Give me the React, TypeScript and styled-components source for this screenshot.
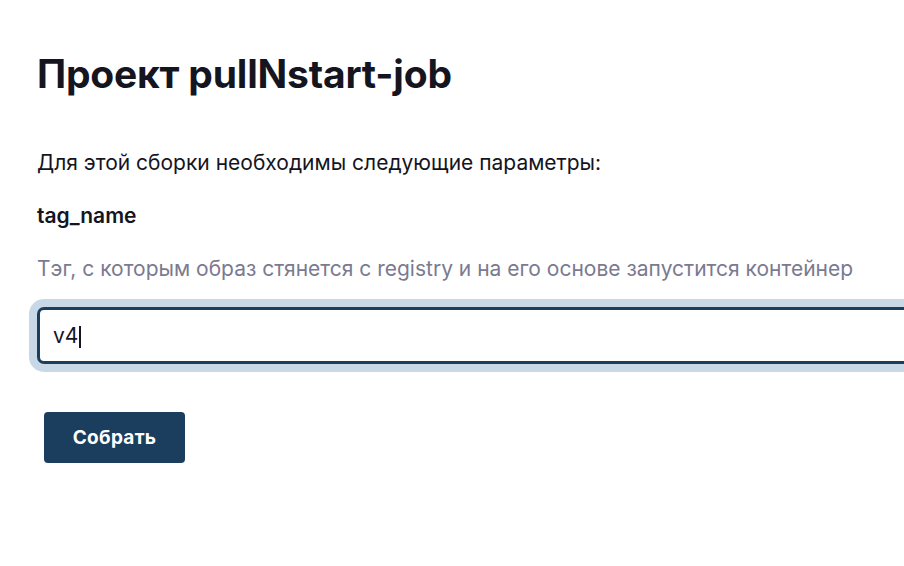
import React, { useEffect, useRef, useState } from "react";
import styled, { createGlobalStyle } from "styled-components";

const FONT = `Inter, "Noto Sans", "Liberation Sans", sans-serif`;

const GlobalStyle = createGlobalStyle`
  html, body {
    margin: 0;
    padding: 0;
    background: #ffffff;
    overflow: clip;
  }
  body {
    font-family: ${FONT};
    color: #15151f;
  }
`;

const Page = styled.div`
  width: 904px;
  height: 566px;
  overflow: clip;
  padding: 50px 0 0 37px;
  box-sizing: border-box;
`;

const Title = styled.h1`
  margin: 0 0 50px;
  font-size: 39px;
  line-height: 47px;
  font-weight: 700;
  letter-spacing: -0.2px;
  color: #15151f;
`;

const Text = styled.p<{ $muted?: boolean; $strong?: boolean }>`
  margin: 0;
  font-size: 21px;
  line-height: 32px;
  font-weight: ${(p) => (p.$strong ? 600 : 400)};
  color: ${(p) => (p.$muted ? "#7a7a90" : "#15151f")};
`;

const Form = styled.form`
  display: flex;
  flex-direction: column;
  align-items: flex-start;
`;

const Params = styled.div`
  display: flex;
  flex-direction: column;
  gap: 21px;
  margin-bottom: 22px;
`;

const FieldWrap = styled.div`
  position: relative;
  width: 1000px;
`;

const Field = styled.input`
  width: 100%;
  height: 57px;
  box-sizing: border-box;
  padding: 0 13px;
  border: 3px solid #1b3d5e;
  border-radius: 7px;
  box-shadow: 0 0 0 8px #c9d8e6;
  font-family: ${FONT};
  font-size: 21px;
  color: #15151f;
  caret-color: transparent;
  background: #ffffff;
  outline: none;
`;

// drawn caret, so the picture keeps it even when the window has no focus
const Caret = styled.span`
  position: absolute;
  top: 19px;
  width: 2px;
  height: 22px;
  background: #15151f;
  pointer-events: none;
`;

const SubmitButton = styled.button`
  margin: 48px 0 0 7px;
  width: 141px;
  height: 51px;
  border: none;
  border-radius: 4px;
  background: #1b3d5e;
  color: #ffffff;
  font-family: ${FONT};
  font-size: 19px;
  font-weight: 700;
  letter-spacing: 0.3px;
  cursor: pointer;
`;

function measure(text: string) {
  const ctx = document.createElement("canvas").getContext("2d");
  if (!ctx) return text.length * 12;
  ctx.font = "400 21px Inter, 'Noto Sans', sans-serif";
  return ctx.measureText(text).width;
}

export default function App() {
  const [tag, setTag] = useState("v4");
  const fieldRef = useRef<HTMLInputElement>(null);

  useEffect(() => {
    const el = fieldRef.current;
    if (el) {
      el.focus({ preventScroll: true });
      el.setSelectionRange(tag.length, tag.length);
    }
  }, []);

  const caretLeft = 16 + Math.round(measure(tag)) + 1;

  return (
    <>
      <GlobalStyle />
      <Page>
        <Title>Проект pullNstart-job</Title>
        <Form onSubmit={(e) => e.preventDefault()}>
          <Params>
            <Text>Для этой сборки необходимы следующие параметры:</Text>
            <Text $strong>tag_name</Text>
            <Text $muted>
              Тэг, с которым образ стянется с registry и на его основе запустится контейнер
            </Text>
          </Params>
          <FieldWrap>
            <Field ref={fieldRef} value={tag} onChange={(e) => setTag(e.target.value)} />
            <Caret style={{ left: caretLeft }} />
          </FieldWrap>
          <SubmitButton type="submit">Собрать</SubmitButton>
        </Form>
      </Page>
    </>
  );
}
